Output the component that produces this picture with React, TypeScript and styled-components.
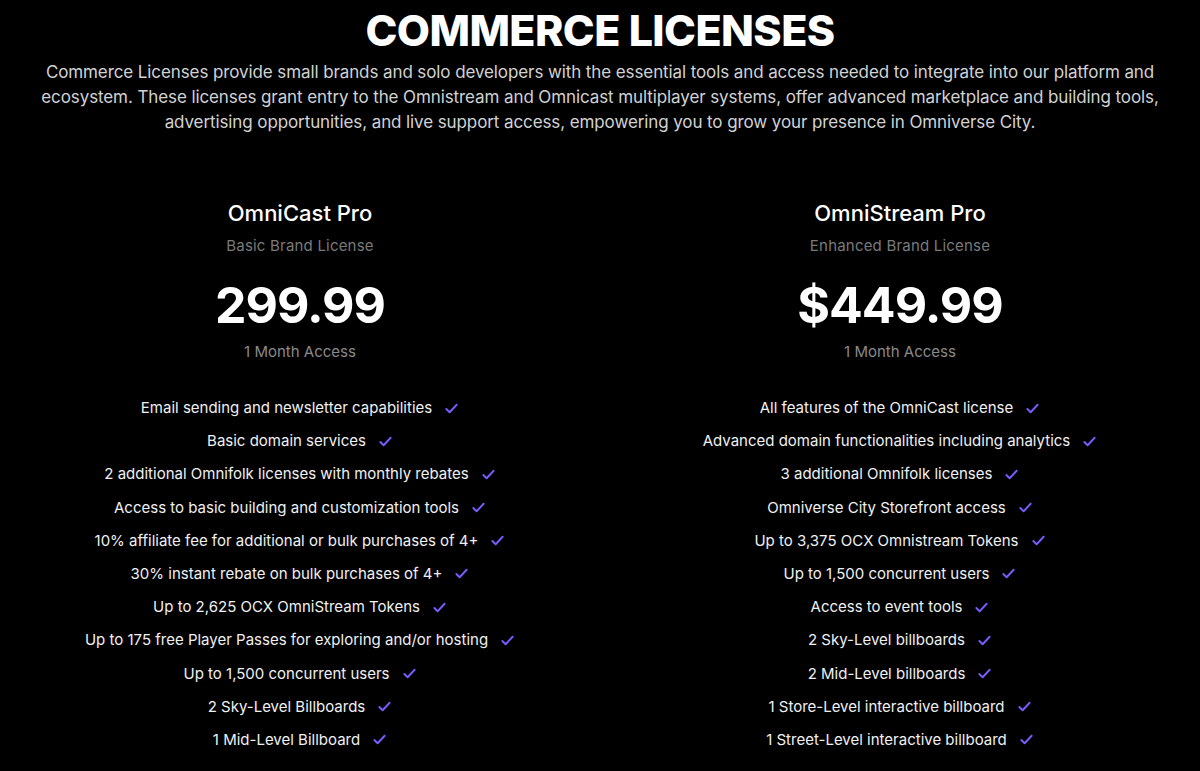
import styled, { createGlobalStyle } from "styled-components";

const GlobalStyle = createGlobalStyle`
  html, body {
    margin: 0;
    padding: 0;
    background: #000;
  }
  body {
    font-family: Inter, "Noto Sans", sans-serif;
    color: #fff;
  }
`;

const Page = styled.div`
  min-height: 771px;
  background: #000;
  padding-top: 6px;
  box-sizing: border-box;
`;

const Header = styled.header`
  display: flex;
  flex-direction: column;
  align-items: center;
  text-align: center;
`;

const Title = styled.h1`
  margin: 0;
  font-size: 43px;
  line-height: 48px;
  font-weight: 800;
  letter-spacing: -0.6px;
  color: #fff;
`;

const Intro = styled.p`
  margin: 6px 0 0;
  max-width: 1132px;
  font-size: 17px;
  line-height: 25px;
  letter-spacing: -0.1px;
  color: #d2d2d2;
`;

const Plans = styled.section`
  display: grid;
  grid-template-columns: 1fr 1fr;
  margin-top: 64px;
`;

const Plan = styled.div`
  display: flex;
  flex-direction: column;
  align-items: center;
  text-align: center;
`;

const PlanName = styled.h2`
  margin: 0;
  font-size: 22px;
  line-height: 28px;
  font-weight: 500;
  color: #fff;
`;

const PlanTier = styled.div`
  margin-top: 9px;
  font-size: 15px;
  line-height: 20px;
  letter-spacing: 0.2px;
  color: #7a7a7a;
`;

const Price = styled.div`
  margin-top: 17px;
  font-size: 50px;
  line-height: 64px;
  font-weight: 700;
  letter-spacing: -1px;
  color: #fff;
`;

const Access = styled.div`
  margin-top: 5px;
  font-size: 15px;
  line-height: 20px;
  color: #8a8a8a;
`;

const Features = styled.ul`
  list-style: none;
  margin: 36px 0 0;
  padding: 0;
  display: flex;
  flex-direction: column;
  align-items: center;
  gap: 13.2px;
`;

const Feature = styled.li`
  display: flex;
  align-items: center;
  gap: 12px;
  font-size: 15px;
  line-height: 20px;
  color: #f0f0f0;
`;

const Check = styled.svg`
  width: 15px;
  height: 15px;
  flex-shrink: 0;
  color: #7b5cff;
`;

const CheckIcon = () => (
  <Check viewBox="0 0 16 16" fill="none">
    <path
      d="M2.5 8.5 L6 12 L13.5 4"
      stroke="currentColor"
      strokeWidth="2"
      strokeLinecap="round"
      strokeLinejoin="round"
    />
  </Check>
);

const plans = [
  {
    name: "OmniCast Pro",
    tier: "Basic Brand License",
    price: "299.99",
    features: [
      "Email sending and newsletter capabilities",
      "Basic domain services",
      "2 additional Omnifolk licenses with monthly rebates",
      "Access to basic building and customization tools",
      "10% affiliate fee for additional or bulk purchases of 4+",
      "30% instant rebate on bulk purchases of 4+",
      "Up to 2,625 OCX OmniStream Tokens",
      "Up to 175 free Player Passes for exploring and/or hosting",
      "Up to 1,500 concurrent users",
      "2 Sky-Level Billboards",
      "1 Mid-Level Billboard",
    ],
  },
  {
    name: "OmniStream Pro",
    tier: "Enhanced Brand License",
    price: "$449.99",
    features: [
      "All features of the OmniCast license",
      "Advanced domain functionalities including analytics",
      "3 additional Omnifolk licenses",
      "Omniverse City Storefront access",
      "Up to 3,375 OCX Omnistream Tokens",
      "Up to 1,500 concurrent users",
      "Access to event tools",
      "2 Sky-Level billboards",
      "2 Mid-Level billboards",
      "1 Store-Level interactive billboard",
      "1 Street-Level interactive billboard",
    ],
  },
];

export default function App() {
  return (
    <Page>
      <GlobalStyle />
      <Header>
        <Title>COMMERCE LICENSES</Title>
        <Intro>
          Commerce Licenses provide small brands and solo developers with the
          essential tools and access needed to integrate into our platform and
          ecosystem. These licenses grant entry to the Omnistream and Omnicast
          multiplayer systems, offer advanced marketplace and building tools,
          advertising opportunities, and live support access, empowering you to
          grow your presence in Omniverse City.
        </Intro>
      </Header>

      <Plans>
        {plans.map((plan) => (
          <Plan key={plan.name}>
            <PlanName>{plan.name}</PlanName>
            <PlanTier>{plan.tier}</PlanTier>
            <Price>{plan.price}</Price>
            <Access>1 Month Access</Access>
            <Features>
              {plan.features.map((f) => (
                <Feature key={f}>
                  <span>{f}</span>
                  <CheckIcon />
                </Feature>
              ))}
            </Features>
          </Plan>
        ))}
      </Plans>
    </Page>
  );
}
